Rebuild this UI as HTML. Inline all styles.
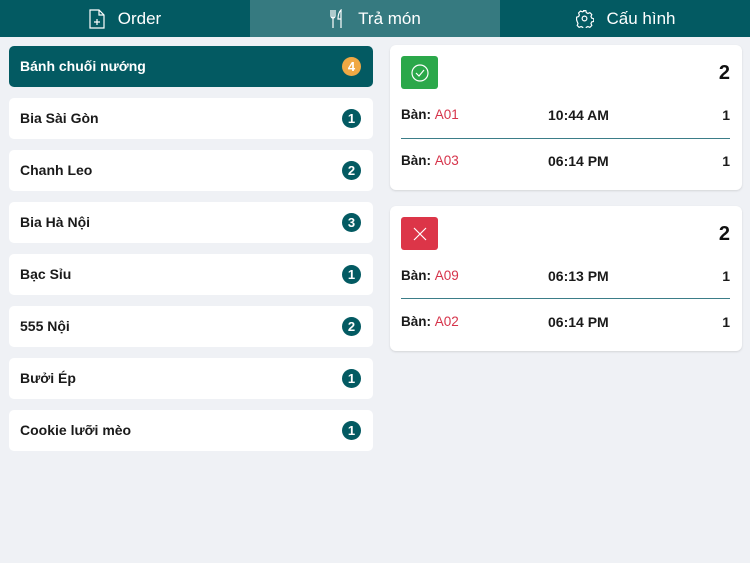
<!DOCTYPE html>
<html><head><meta charset="utf-8"><style>
*{margin:0;padding:0;box-sizing:border-box}
body{width:750px;height:563px;background:#eff1f5;font-family:"Liberation Sans",sans-serif;position:relative;overflow:hidden}
.nav{position:absolute;top:0;left:0;width:750px;height:37px;background:#035a62;display:flex}
.tab{width:250px;height:37px;display:flex;align-items:center;justify-content:center;color:#fff;font-size:17px;gap:13px}
.tab.act{background:#367a80}
.item{position:absolute;left:9px;width:364px;height:41px;background:#fff;border-radius:5px;font-size:14px;font-weight:bold;color:#1a1a1a;padding-left:11px;line-height:41px}
.item.sel{background:#035a62;color:#fff}
.b{position:absolute;right:12px;top:11px;width:19px;height:19px;border-radius:50%;background:#035a62;color:#fff;font-size:13px;font-weight:bold;line-height:19px;text-align:center}
.card{position:absolute;left:390px;width:352px;height:145px;background:#fff;border-radius:6px;box-shadow:0 1px 2px rgba(0,0,0,.12)}
.ic{position:absolute;left:11px;top:11px;width:37px;height:33px;border-radius:3px;display:flex;align-items:center;justify-content:center}
.n{position:absolute;right:12px;top:17px;font-size:20px;font-weight:bold;color:#111}
.row{position:absolute;left:11px;right:12px;height:20px;font-size:13.5px;font-weight:bold;color:#1a1a1a}
.row span.r{color:#d6334a;font-weight:normal}
.row .t{position:absolute;left:147px;top:0;font-weight:bold;font-size:14px}
.row .q{position:absolute;right:0;top:0;font-size:14px}
.ln{position:absolute;left:11px;right:12px;height:1px;background:#3b7d88}
</style></head><body>
<div class="nav">
<div class="tab"><svg width="16" height="20" viewBox="0 0 16 20" fill="none" stroke="#fff" stroke-width="1.2"><path d="M1 1h9l5 5v13H1z"/><path d="M10 1v5h5"/><path d="M8 10v6M5 13h6"/></svg>Order</div>
<div class="tab act"><svg width="16" height="20" viewBox="0 0 16 20" fill="none" stroke="#fff" stroke-width="1.2"><path d="M2 1v6a2 2 0 004 0V1M4 1v18"/><path d="M12 19V1c-2 2-3 5-3 9h3"/></svg>Trả món</div>
<div class="tab"><svg width="19" height="19" viewBox="0 0 24 24" fill="none" stroke="#fff" stroke-width="1.5"><circle cx="12" cy="12" r="3"/><path d="M10.3 2h3.4l.6 2.6 2 1 2.5-1 2.4 2.4-1 2.5.9 2 2.6.8v3.4l-2.6.6-.9 2 1 2.5-2.4 2.4-2.5-1-2 .9-.6 2.7h-3.4l-.6-2.7-2-.9-2.5 1-2.4-2.4 1-2.5-.9-2L2 13.7v-3.4l2.6-.8.9-2-1-2.5 2.4-2.4 2.5 1 2-1z"/></svg>Cấu hình</div>
</div>
<div class="item sel" style="top:46px">Bánh chuối nướng<div class="b" style="background:#f0a844">4</div></div>
<div class="item" style="top:98px">Bia Sài Gòn<div class="b">1</div></div>
<div class="item" style="top:150px">Chanh Leo<div class="b">2</div></div>
<div class="item" style="top:202px">Bia Hà Nội<div class="b">3</div></div>
<div class="item" style="top:254px">Bạc Sỉu<div class="b">1</div></div>
<div class="item" style="top:306px">555 Nội<div class="b">2</div></div>
<div class="item" style="top:358px">Bưởi Ép<div class="b">1</div></div>
<div class="item" style="top:410px">Cookie lưỡi mèo<div class="b">1</div></div>

<div class="card" style="top:45px">
<div class="ic" style="background:#2ba84a"><svg width="20" height="20" viewBox="0 0 20 20" fill="none" stroke="#fff" stroke-width="1.2"><circle cx="10" cy="10" r="8"/><path d="M6 10l3 3 5-6"/></svg></div>
<div class="n">2</div>
<div class="row" style="top:62px">Bàn: <span class="r">A01</span><span class="t">10:44 AM</span><span class="q">1</span></div>
<div class="ln" style="top:93px"></div>
<div class="row" style="top:108px">Bàn: <span class="r">A03</span><span class="t">06:14 PM</span><span class="q">1</span></div>
</div>
<div class="card" style="top:206px">
<div class="ic" style="background:#dc3548"><svg width="16" height="16" viewBox="0 0 16 16" stroke="#fff" stroke-width="1.2"><path d="M2 2l12 12M14 2L2 14"/></svg></div>
<div class="n">2</div>
<div class="row" style="top:62px">Bàn: <span class="r">A09</span><span class="t">06:13 PM</span><span class="q">1</span></div>
<div class="ln" style="top:92px"></div>
<div class="row" style="top:108px">Bàn: <span class="r">A02</span><span class="t">06:14 PM</span><span class="q">1</span></div>
</div>
</body></html>
